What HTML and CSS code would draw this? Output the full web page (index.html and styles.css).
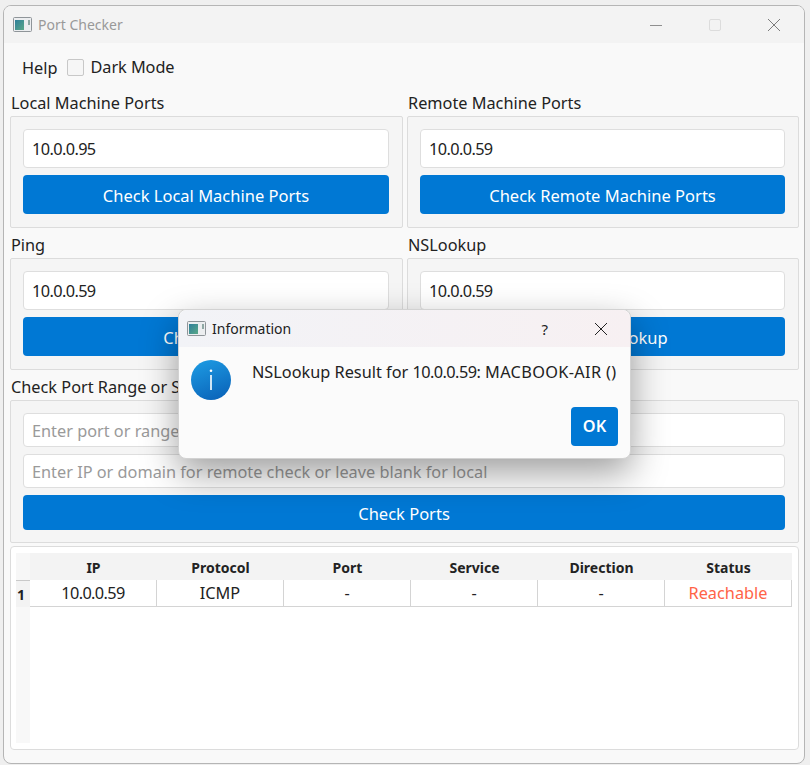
FILE: index.html
```html
<html>
  <head>
    <meta charset="utf-8" />
    <title>Port Checker</title>
    <link rel="stylesheet" href="styles.css">
  </head>
  <body>
    <div class="window">
      <div class="titlebar">
        <svg class="app_icon" viewBox="0 0 19 15">
          <defs>
            <linearGradient id="appfill" x1="0" y1="0" x2="1" y2="1">
              <stop offset="0" stop-color="#2f7f9a" />
              <stop offset="1" stop-color="#5aa888" />
            </linearGradient>
          </defs>
          <rect x="0.5" y="0.5" width="18" height="14" rx="1" fill="#eceef0" stroke="#8f9599" />
          <rect x="2" y="3" width="9" height="10" fill="url(#appfill)" />
          <rect x="15" y="3" width="2" height="5" fill="#8fa8a4" />
        </svg>
        <span class="title_text">Port Checker</span>
        <div class="win_buttons">
          <svg class="win_btn" viewBox="0 0 14 14"><path d="M1 7.5h12" stroke="#8f8f8f" fill="none" /></svg>
          <svg class="win_btn" viewBox="0 0 14 14"><rect x="1.5" y="1.5" width="11" height="11" rx="1.5" stroke="#dcdcdc" fill="none" /></svg>
          <svg class="win_btn" viewBox="0 0 14 14"><path d="M1 1l12 12M13 1L1 13" stroke="#7c7c7c" fill="none" /></svg>
        </div>
      </div>

      <div class="content">
        <div class="menu_row">
          <span class="help">Help</span>
          <span class="checkbox"></span>
          <span class="check_label">Dark Mode</span>
        </div>

        <div class="two_cols">
          <div class="group">
            <div class="group_label">Local Machine Ports</div>
            <div class="group_box">
              <div class="input num">10.0.0.95</div>
              <div class="button">Check Local Machine Ports</div>
            </div>
          </div>
          <div class="group">
            <div class="group_label">Remote Machine Ports</div>
            <div class="group_box">
              <div class="input num">10.0.0.59</div>
              <div class="button">Check Remote Machine Ports</div>
            </div>
          </div>
          <div class="group">
            <div class="group_label">Ping</div>
            <div class="group_box">
              <div class="input num">10.0.0.59</div>
              <div class="button">Check Ping</div>
            </div>
          </div>
          <div class="group">
            <div class="group_label">NSLookup</div>
            <div class="group_box">
              <div class="input num">10.0.0.59</div>
              <div class="button">Check NSLookup</div>
            </div>
          </div>
        </div>

        <div class="group">
          <div class="group_label">Check Port Range or Service</div>
          <div class="group_box range_box">
            <div class="input small placeholder">Enter port or range</div>
            <div class="input small placeholder">Enter IP or domain for remote check or leave blank for local</div>
            <div class="button small">Check Ports</div>
          </div>
        </div>

        <div class="table_box">
          <div class="table">
            <div class="corner"></div>
            <div class="th">IP</div>
            <div class="th">Protocol</div>
            <div class="th">Port</div>
            <div class="th">Service</div>
            <div class="th">Direction</div>
            <div class="th">Status</div>

            <div class="row_head">1</div>
            <div class="td num">10.0.0.59</div>
            <div class="td">ICMP</div>
            <div class="td">-</div>
            <div class="td">-</div>
            <div class="td">-</div>
            <div class="td reach">Reachable</div>

            <div class="row_fill"></div>
          </div>
        </div>
      </div>
    </div>

    <div class="dialog">
      <div class="dialog_title">
        <svg class="app_icon" viewBox="0 0 19 15">
          <rect x="0.5" y="0.5" width="18" height="14" rx="1" fill="#eceef0" stroke="#8f9599" />
          <rect x="2" y="3" width="9" height="10" fill="url(#appfill)" />
          <rect x="15" y="3" width="2" height="5" fill="#8fa8a4" />
        </svg>
        <span class="dialog_name">Information</span>
        <span class="question">?</span>
        <svg class="dialog_close" viewBox="0 0 14 14"><path d="M1 1l12 12M13 1L1 13" stroke="#222" fill="none" /></svg>
      </div>
      <div class="dialog_body">
        <svg class="info_icon" viewBox="0 0 40 40">
          <defs>
            <linearGradient id="infofill" x1="0.2" y1="0" x2="0.6" y2="1">
              <stop offset="0" stop-color="#1d9ae2" />
              <stop offset="1" stop-color="#0b66bb" />
            </linearGradient>
          </defs>
          <circle cx="20" cy="20" r="20" fill="url(#infofill)" />
          <rect x="19.2" y="15" width="1.6" height="15" fill="#fff" />
          <circle cx="20" cy="10.8" r="1.3" fill="#fff" />
        </svg>
        <div class="dialog_text">NSLookup Result for <span class="ip">10.0.0.59</span>: <span class="host">MACBOOK-AIR ()</span></div>
      </div>
      <div class="dialog_foot">
        <div class="ok">OK</div>
      </div>
    </div>
  </body>
</html>
```

FILE: styles.css
```css
html,
body {
  margin: 0;
  height: 765px;
  overflow: hidden;
  background-color: #efefef;
  font-family: "Noto Sans", "Liberation Sans", sans-serif;
  font-size: 16.3px;
  color: #222;
}

.window {
  width: 802px;
  height: 759px;
  margin: 5px 0 0 3px;
  box-sizing: border-box;
  border: 1px solid #b5b5b5;
  border-radius: 8px;
  background-color: #f9f9f9;
  overflow: hidden;
}

.titlebar {
  height: 37px;
  background-color: #f3f3f3;
  display: flex;
  align-items: center;
  padding-left: 9px;
  box-sizing: border-box;
}

.app_icon {
  width: 19px;
  height: 15px;
  flex: none;
}

.title_text {
  margin-left: 6px;
  font-size: 14px;
  color: #999;
}

.win_buttons {
  margin-left: auto;
  display: flex;
  gap: 45px;
  padding-right: 23px;
}

.win_btn {
  width: 14px;
  height: 14px;
}

.content {
  padding: 0 5px 0 6px;
}

.menu_row {
  height: 51px;
  display: flex;
  align-items: center;
  padding: 0 0 3px 12px;
  box-sizing: border-box;
}

.help {
  margin-right: 10px;
  padding-top: 2px;
}

.checkbox {
  width: 17px;
  height: 17px;
  box-sizing: border-box;
  border: 1px solid #c8c8c8;
  border-radius: 2px;
  background-color: #f6f6f6;
  margin-right: 6px;
}

.check_label {
  letter-spacing: -0.05px;
}

.two_cols {
  display: grid;
  grid-template-columns: 393px 392px;
  column-gap: 4px;
  row-gap: 8px;
  margin-bottom: 8px;
}

.group_label {
  height: 22px;
  line-height: 18px;
  padding-left: 1px;
  white-space: nowrap;
}

.group_box {
  display: flex;
  flex-direction: column;
  gap: 7px;
  padding: 12px 13px 13px 12px;
  border: 1px solid #dcdcdc;
  border-radius: 2px;
  background-color: #f5f5f5;
}

.range_box {
  padding-bottom: 12px;
}

.input {
  height: 39px;
  box-sizing: border-box;
  line-height: 37px;
  padding: 1px 0 0 8px;
  background-color: #fff;
  border: 1px solid #dedede;
  border-radius: 4px;
  white-space: nowrap;
  overflow: hidden;
}

.input.small {
  height: 34px;
  line-height: 32px;
}

.num {
  letter-spacing: -0.6px;
}

.placeholder {
  color: #9a9a9a;
}

.button {
  height: 39px;
  box-sizing: border-box;
  padding-top: 1px;
  line-height: 39px;
  text-align: center;
  font-size: 16.5px;
  color: #fff;
  background-color: #0078d4;
  border-radius: 4px;
}

.button.small {
  height: 35px;
  line-height: 35px;
}

.table_box {
  margin-top: 3px;
  height: 204px;
  box-sizing: border-box;
  padding: 6px 6px 6px 5px;
  border: 1px solid #dcdcdc;
  border-radius: 4px;
  background-color: #fff;
}

.table {
  display: grid;
  grid-template-columns: 14px repeat(6, 127px);
  grid-template-rows: 27px 27px 1fr;
  height: 190px;
  width: 776px;
}

.corner {
  background-color: #f7f7f7;
}

.th {
  background-color: #f3f3f3;
  box-sizing: border-box;
  padding-top: 1px;
  font-weight: 700;
  font-size: 14px;
  text-align: center;
  line-height: 27px;
}

.row_head {
  background-color: #f3f3f3;
  border-top: 1px solid #c9c9c9;
  font-weight: 700;
  font-size: 14px;
  line-height: 27px;
  padding-left: 1px;
}

.td {
  text-align: center;
  line-height: 26px;
  border-right: 1px solid #d4d4d4;
  border-bottom: 1px solid #d4d4d4;
  box-sizing: border-box;
}

.reach {
  color: #ff6347;
}

.row_fill {
  grid-column: 1;
  background-color: #f8f8f8;
}

/* message box lies over the main window */
.dialog {
  position: absolute;
  left: 178px;
  top: 309px;
  width: 453px;
  height: 150px;
  box-sizing: border-box;
  background-color: #fbfbfb;
  border: 1px solid #d2d2d2;
  border-radius: 8px;
  box-shadow: 0 14px 36px rgba(0, 0, 0, 0.38);
}

.dialog_title {
  height: 37px;
  display: flex;
  align-items: center;
  padding-left: 8px;
  border-radius: 8px 8px 0 0;
  background: linear-gradient(90deg, #f2f3f7, #f7f0f2);
}

.dialog_name {
  margin-left: 6px;
  font-size: 14px;
}

.question {
  margin-left: auto;
  font-size: 15px;
}

.dialog_close {
  width: 14px;
  height: 14px;
  margin: 0 22px 0 46px;
}

.dialog_body {
  display: flex;
  padding-top: 13px;
  padding-left: 12px;
}

.info_icon {
  width: 40px;
  height: 40px;
  flex: none;
}

.dialog_text {
  margin-left: 21px;
  line-height: 24px;
  white-space: nowrap;
}

.ip {
  letter-spacing: -0.55px;
}

.host {
  letter-spacing: 0.35px;
}

.dialog_foot {
  display: flex;
  justify-content: flex-end;
  padding-right: 12px;
  margin-top: 7px;
}

.ok {
  width: 47px;
  height: 39px;
  line-height: 39px;
  text-align: center;
  color: #fff;
  font-weight: 600;
  background-color: #0078d4;
  border-radius: 4px;
}
```
